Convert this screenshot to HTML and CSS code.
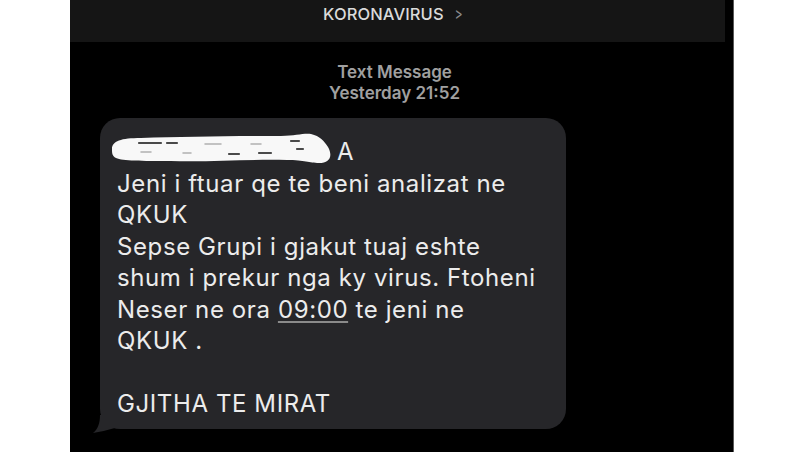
FILE: index.html
```html
<!DOCTYPE html>
<html lang="sq">

<head>
    <meta charset="UTF-8">
    <meta name="viewport" content="width=device-width, initial-scale=1.0">
    <title>KORONAVIRUS</title>
    <link rel="stylesheet" href="styles.css">
</head>

<body>
    <div class="phone">
        <div class="top-bar">
            <span class="contact">KORONAVIRUS</span>
            <span class="chevron">&gt;</span>
        </div>

        <div class="meta">
            <div class="meta-type">Text Message</div>
            <div class="meta-time">Yesterday 21:52</div>
        </div>

        <div class="bubble">
            <div class="line first-line">A
                <svg class="scribble" viewBox="0 0 222 32" aria-hidden="true">
                    <path d="M1 17 C1 9 10 6 30 6 C70 5 120 4 170 4 C185 4 192 1 200 2 C209 4 213 9 217 15 C222 24 219 31 208 31 C198 31 194 28 176 28 C140 27 100 30 60 29 C30 29 12 29 5 26 C1 24 1 21 1 17 Z" fill="#f8f8f8"/>
                    <path d="M28 11 H50 M56 11 H66 M118 22 H128 M148 21 H160 M180 9 H188 M186 17 H192" stroke="#4a4a4a" stroke-width="2.2" stroke-linecap="round"/>
                    <path d="M94 12 H110 M30 20 H40 M72 21 H80 M140 12 H150" stroke="#b0b0b0" stroke-width="1.5" stroke-linecap="round"/>
                </svg>
            </div>
            <div class="line">Jeni i ftuar qe te beni analizat ne</div>
            <div class="line">QKUK</div>
            <div class="line">Sepse Grupi i gjakut tuaj eshte</div>
            <div class="line">shum i prekur nga ky virus. Ftoheni</div>
            <div class="line">Neser ne ora <span class="time-link">09:00</span> te jeni ne</div>
            <div class="line">QKUK .</div>
            <div class="line">&nbsp;</div>
            <div class="line">GJITHA TE MIRAT</div>
            <svg class="tail" viewBox="0 0 22 18" aria-hidden="true">
                <path d="M7 0 C7 8 5 14 0 18 C7 17 14 15 22 13 L22 0 Z" fill="#262629"/>
            </svg>
        </div>
    </div>
</body>

</html>
```

FILE: styles.css
```css
* {
    margin: 0;
    padding: 0;
    box-sizing: border-box;
}

body {
    background: #ffffff;
    font-family: Inter, 'Liberation Sans', Arial, sans-serif;
    overflow: hidden;
}

.phone {
    width: 664px;
    height: 452px;
    margin-left: 70px;
    background: #000000;
    border-right: 1px solid #5a5a5a;
    display: flex;
    flex-direction: column;
}

.top-bar {
    width: 655px;
    height: 42px;
    background: #151515;
    display: flex;
    justify-content: center;
    align-items: flex-start;
    gap: 9px;
    padding-top: 4px;
    padding-right: 8px;
}

.contact {
    color: #dadada;
    font-size: 16.5px;
    font-weight: 500;
    letter-spacing: 0.1px;
}

.chevron {
    color: #8a8a8a;
    font-size: 17px;
    transform: scaleX(0.7);
}

.meta {
    text-align: center;
    color: #a0a0a0;
    font-size: 17px;
    font-weight: 600;
    line-height: 21px;
    margin-top: 20px;
    padding-right: 14px;
}

.bubble {
    position: relative;
    width: 466px;
    margin-left: 30px;
    margin-top: 14px;
    background: #262629;
    border-radius: 20px;
    padding: 18px 0 9px 17px;
    color: #ececec;
    font-size: 24px;
    line-height: 31.5px;
    letter-spacing: 0.6px;
}

.line {
    white-space: nowrap;
}

.first-line {
    position: relative;
    padding-left: 220px;
}

.scribble {
    position: absolute;
    left: -6px;
    top: -4px;
    width: 222px;
    height: 32px;
}

.time-link {
    text-decoration: underline;
    text-decoration-color: #8a8a8a;
    text-underline-offset: 3px;
}

.tail {
    position: absolute;
    left: -7px;
    bottom: -4px;
    width: 22px;
    height: 18px;
}
```
